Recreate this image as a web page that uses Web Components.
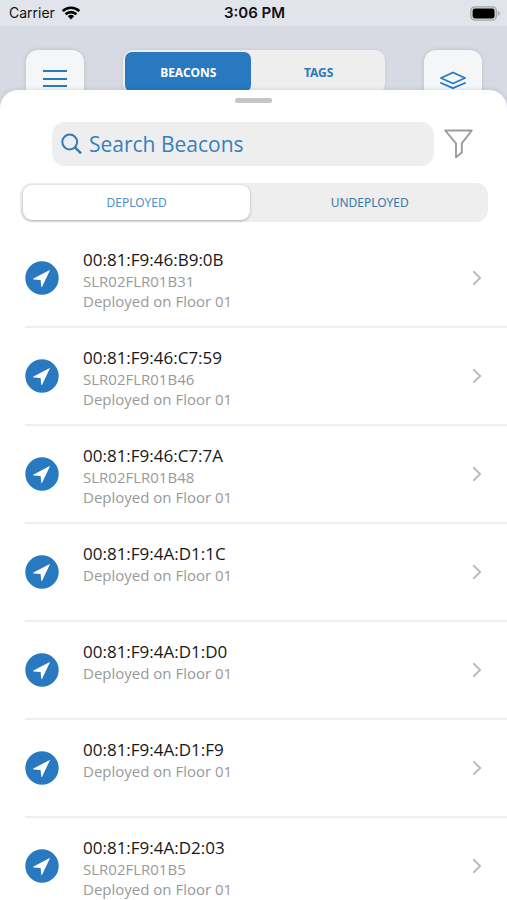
<!DOCTYPE html>
<html lang="en">
<head>
<meta charset="utf-8">
<meta name="viewport" content="width=device-width, initial-scale=1">
<title>Beacons</title>
<style>
  body { margin: 0; font-family: "Open Sans", "Noto Sans", sans-serif; --blue: #2879c0; --grey: #eeeeee; }
</style>
</head>
<body>
<beacon-app></beacon-app>
<script>
class Base extends HTMLElement {
  connectedCallback() {
    if (!this.shadowRoot) this.attachShadow({ mode: "open" }).innerHTML = this.view();
  }
}

customElements.define("status-bar", class extends Base {
  view() {
    return `<style>
      :host { display: grid; grid-template-columns: 1fr auto 1fr; align-items: center; height: 26px; padding: 0 7px 0 9px; background: #e1e4eb; color: #111; font: 15px/26px Inter, "Liberation Sans", sans-serif; }
      .left { display: flex; align-items: center; gap: 6px; font-size: 14px; }
      b { font-weight: 600; font-size: 15px; }
      .battery { justify-self: end; }
      svg { display: block; }
    </style>
    <span class="left">Carrier
      <svg width="20" height="16" viewBox="0 0 20 16" fill="none" stroke="#000" stroke-width="2.7"><path d="M1.7 6.1a12 12 0 0 1 16.6 0M4.6 9.2a7.8 7.8 0 0 1 10.8 0"/><path d="M10 14.4 6.8 11.2a4.7 4.7 0 0 1 6.4 0z" fill="#000" stroke="none"/></svg>
    </span>
    <b>3:06 PM</b>
    <svg class="battery" width="30" height="15" viewBox="0 0 30 15"><rect x=".8" y=".8" width="25.6" height="13.4" rx="4.2" fill="#dadce1" stroke="#a4a6ab" stroke-width="1.3"/><rect x="2.6" y="2.6" width="22" height="9.8" rx="2.4"/><path d="M27.8 5v5q2-.8 2-2.5T27.8 5z" fill="#a4a6ab"/></svg>`;
  }
});

customElements.define("icon-button", class extends Base {
  view() {
    return `<style>
      :host { display: block; flex: none; width: 58px; }
      button { display: flex; justify-content: center; width: 100%; height: 58px; padding: 18px 0 0; border: 0; border-radius: 12px; background: #f4f6f8; box-shadow: 0 0 4px #0002; }
    </style><button aria-label="${this.getAttribute("label")}"><slot></slot></button>`;
  }
});

customElements.define("segment-control", class extends Base {
  view() {
    const [a, b] = this.getAttribute("options").split(",");
    return `<style>
      :host { display: flex; gap: 3px; box-sizing: border-box; background: var(--grey); border-radius: 12px; padding: 2px; }
      button { flex: 1; margin: 0; padding: 0; border: 0; border-radius: 9px; background: none; color: #3877a6; font: 12px/16px "Noto Sans", sans-serif; }
      button[aria-pressed="true"] { flex: 0 0 49%; margin-left: 1px; background: #fff; color: #4a90cb; box-shadow: 0 1px 3px #0004; }
      :host([solid]) { border-radius: 10px; box-shadow: 0 0 4px #0001; }
      :host([solid]) button { padding-top: 2px; font-weight: 700; color: var(--blue); }
      :host([solid]) button[aria-pressed="true"] { background: var(--blue); color: #fff; border-radius: 7px; box-shadow: none; margin: 0; }
    </style><button aria-pressed="true">${a}</button><button aria-pressed="false">${b}</button>`;
  }
});

customElements.define("app-header", class extends Base {
  view() {
    return `<style>
      :host { display: flex; justify-content: space-between; align-items: flex-start; padding: 24px 25px 0 26px; height: 84px; box-sizing: border-box; }
      segment-control { width: 262px; height: 44px; }
      svg { display: block; }
    </style>
    <icon-button label="Menu"><svg width="26" height="22" viewBox="0 0 26 22" stroke="#2879c0" stroke-width="2"><path d="M1 3h24M1 11h24M1 18h24"/></svg></icon-button>
    <segment-control solid options="BEACONS,TAGS"></segment-control>
    <icon-button label="Floors"><svg width="28" height="24" viewBox="0 0 28 24" fill="none" stroke="#2879c0" stroke-width="1.9" stroke-linejoin="round" stroke-linecap="round"><path d="M14 4.5 26 10l-12 5.5L2 10zM2 15l12 5.2L26 15"/></svg></icon-button>`;
  }
});

customElements.define("search-row", class extends Base {
  view() {
    return `<style>
      :host { display: flex; align-items: center; gap: 10px; padding: 0 34px 0 52px; }
      label { flex: 1; min-width: 0; display: flex; align-items: center; gap: 7px; height: 44px; padding-left: 9px; box-sizing: border-box; background: var(--grey); border-radius: 13px; }
      input { flex: 1; min-width: 0; padding: 0; border: 0; outline: 0; background: none; color: var(--blue); font: 21px/30px "Open Sans", sans-serif; }
      input::placeholder { color: #3580bf; opacity: 1; }
      button { display: block; padding: 0; border: 0; background: none; }
      svg { display: block; flex: none; }
    </style>
    <label><svg width="21" height="22" viewBox="0 0 21 22" fill="none" stroke="#2f7cbd" stroke-width="2"><circle cx="8.7" cy="9" r="7.4"/><path d="m14 14.4 6 6" stroke-width="2.5"/></svg><input type="search" aria-label="Search Beacons" placeholder="Search Beacons"></label>
    <button aria-label="Filter"><svg width="29" height="30" viewBox="0 0 29 30" fill="none" stroke="#9b9b9b" stroke-width="1.9" stroke-linejoin="round"><path d="M1.2 1.5h26.6L17.8 14.3v9.2l-5.8 4.8v-14z"/></svg></button>`;
  }
});

customElements.define("beacon-row", class extends Base {
  view() {
    const tag = this.getAttribute("tag");
    return `<style>
      :host { display: block; padding-left: 25px; }
      a { display: flex; align-items: center; gap: 24px; height: 98px; padding-right: 25px; box-sizing: border-box; border-bottom: 2px solid #efefef; color: inherit; text-decoration: none; }
      div { flex: 1; align-self: flex-start; padding-top: 18px; font-size: 15px; line-height: 20px; color: #999; }
      strong { display: block; font-weight: 400; font-size: 17px; line-height: 23px; color: #181818; }
      span { display: block; }
      svg { flex: none; }
    </style>
    <a href="#">
      <svg width="34" height="34" viewBox="0 0 34 34"><circle cx="17" cy="17" r="16.7" fill="#2879c0"/><path d="M24.3 9.2Q25 8.8 24.7 9.7L17.2 25.4Q16.5 26.6 16.2 25.2L15.6 19 8.7 18.4Q7.3 18.1 8.5 17.4z" fill="#fff"/></svg>
      <div><strong>${this.getAttribute("mac")}</strong>${tag ? `<span>${tag}</span>` : ""}<span>Deployed on Floor 01</span></div>
      <svg width="10" height="16" viewBox="0 0 10 16" fill="none" stroke="#bcbcbc" stroke-width="2"><path d="m1.3 1.3 6.8 6.7-6.8 6.7"/></svg>
    </a>`;
  }
});

customElements.define("bottom-sheet", class extends Base {
  view() {
    return `<style>
      :host { display: flex; flex-direction: column; background: #fff; border-radius: 18px 18px 0 0; box-shadow: 0 0 5px #0002; }
      i { flex: none; align-self: center; width: 37px; height: 5px; margin: 8px 0 19px; border-radius: 3px; background: #c6c6c6; }
    </style><i></i><slot></slot>`;
  }
});

customElements.define("beacon-app", class extends Base {
  view() {
    const rows = [["46:B9:0B", "SLR02FLR01B31"], ["46:C7:59", "SLR02FLR01B46"], ["46:C7:7A", "SLR02FLR01B48"], ["4A:D1:1C", ""], ["4A:D1:D0", ""], ["4A:D1:F9", ""], ["4A:D2:03", "SLR02FLR01B5"]];
    return `<style>
      :host { display: flex; flex-direction: column; height: 100vh; overflow: hidden; background: #d7dae2; }
      status-bar, app-header { flex: none; }
      bottom-sheet { flex: 1; min-height: 0; margin-top: -20px; position: relative; }
      search-row { flex: none; }
      .tabs { flex: none; height: 39px; margin: 17px 19px 8px 20px; }
      main { flex: 1; min-height: 0; overflow-y: auto; scrollbar-width: none; }
    </style>
    <status-bar></status-bar>
    <app-header></app-header>
    <bottom-sheet>
      <search-row></search-row>
      <segment-control class="tabs" options="DEPLOYED,UNDEPLOYED"></segment-control>
      <main>${rows.map(([m, t]) => `<beacon-row mac="00:81:F9:${m}" tag="${t}"></beacon-row>`).join("")}</main>
    </bottom-sheet>`;
  }
});
</script>
</body>
</html>
